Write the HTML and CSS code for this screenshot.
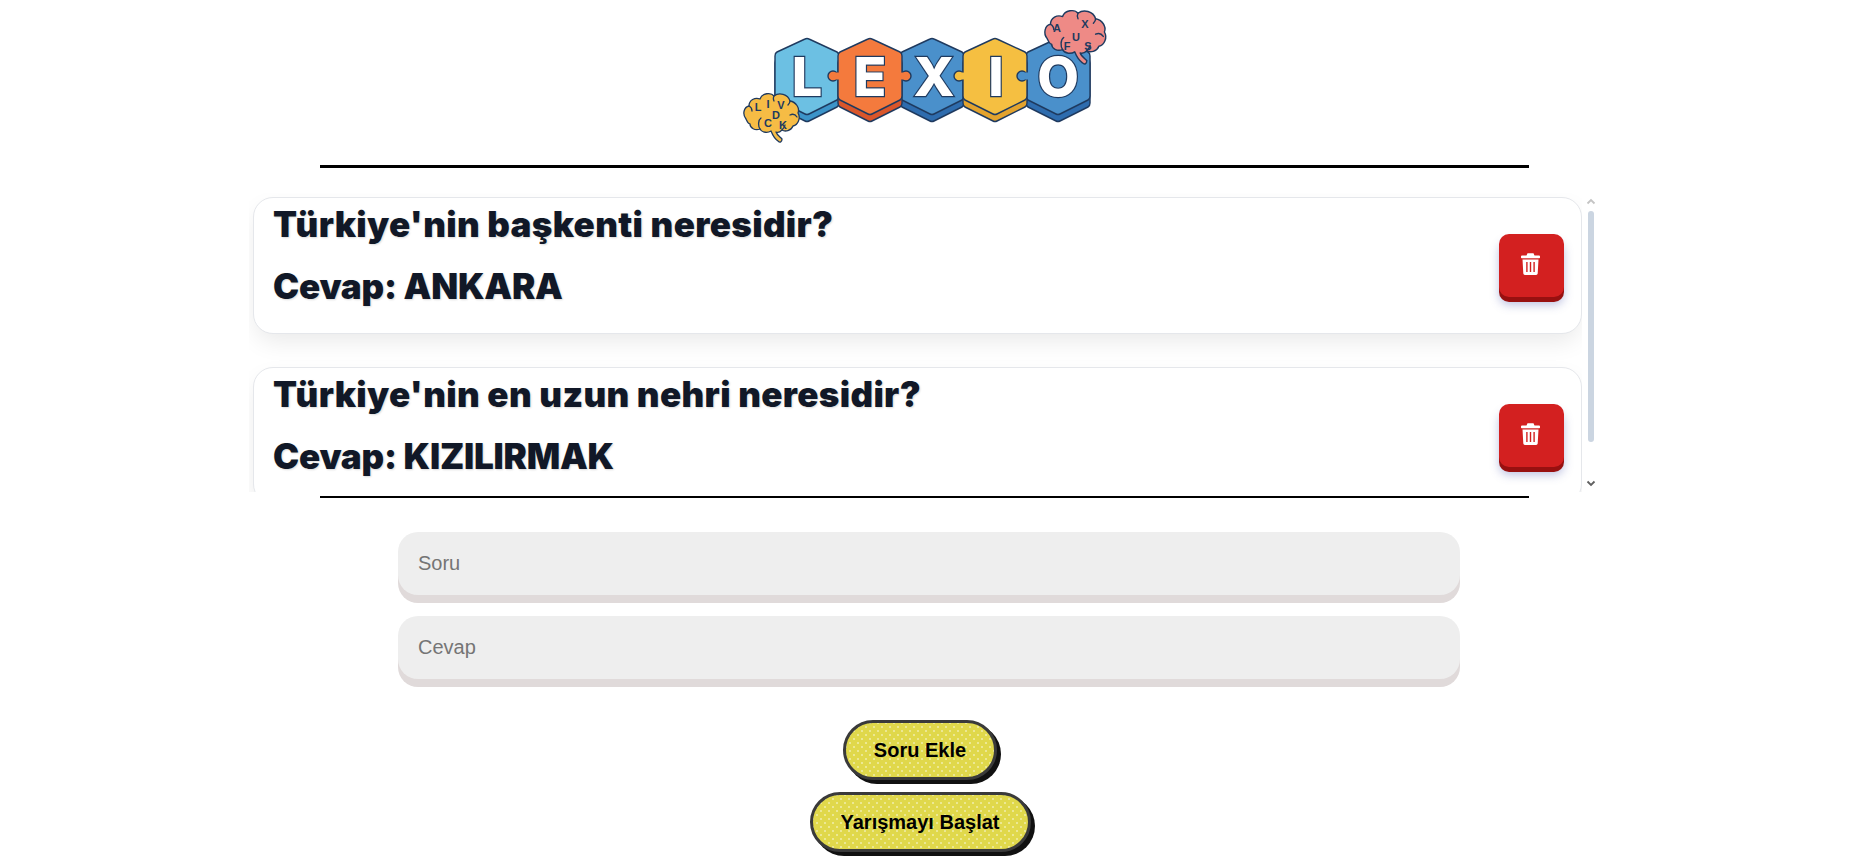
FILE: index.html
```html
<!DOCTYPE html>
<html>
<head>
    <meta charset="utf-8">
    <link rel="stylesheet" href="styles.css">
    <title>Lexio</title>
</head>
<body>
    <div class="page">
        <svg class="logo" viewBox="-5 0 400 165" width="400" height="165">
            <defs>
                <path id="hex" d="M-2 -37 Q0 -38 2 -37 L30 -24 Q32 -23 32 -20 L32 20 Q32 23 30 24 L2 38 Q0 39 -2 38 L-30 24 Q-32 23 -32 20 L-32 -20 Q-32 -23 -30 -24 Z"/>
                <path id="brain" d="M2 26 C-2 21 0 14 5 13 C5 7 11 4 16 6 C18 0 27 -1 30 3 C35 -1 44 1 46 8 C52 9 56 15 54 20 C57 25 54 32 49 33 C47 38 41 39 38 37 C36 39 34 40 32 39 C33 42 36 44 38 46 C38 49 36 50 34 48 C31 46 29 43 27 38 C24 40 18 40 16 36 C11 38 6 35 6 31 C4 31 3 28 2 26 Z"/>
                <path id="creases" d="M5 13 C7 14 8 16 8 18 M30 3 C29 5 29 6 30 8 M46 8 C46 10 45 11 44 12 M17 25 C14 27 14 33 16 36 M46 22 C48 21 51 21 53 24 M38 37 C40 35 41 34 41 32"/>
            </defs>

            <g class="hex-row">
                <use href="#hex" x="77" y="83" fill="#3c94c9"/>
                <use href="#hex" x="77" y="76" fill="#6cc0e3"/>
                <use href="#hex" x="328" y="83" fill="#2e6cae"/>
                <use href="#hex" x="328" y="76" fill="#4a90cb"/>
                <use href="#hex" x="202" y="83" fill="#2e6cae"/>
                <use href="#hex" x="202" y="76" fill="#4a90cb"/>
                <use href="#hex" x="140" y="83" fill="#d9562b"/>
                <use href="#hex" x="140" y="76" fill="#f47a3d"/>
                <use href="#hex" x="265" y="83" fill="#e3a32e"/>
                <use href="#hex" x="265" y="76" fill="#f5bf41"/>
                <circle cx="103" cy="76" r="5" fill="#f47a3d"/>
                <rect x="104" y="72.5" width="6" height="7" fill="#f47a3d"/>
                <circle cx="176" cy="76" r="5" fill="#f47a3d"/>
                <rect x="169" y="72.5" width="6" height="7" fill="#f47a3d"/>
                <circle cx="229" cy="76" r="5" fill="#f5bf41"/>
                <rect x="230" y="72.5" width="6" height="7" fill="#f5bf41"/>
                <circle cx="292" cy="76" r="5" fill="#4a90cb"/>
                <rect x="293" y="72.5" width="6" height="7" fill="#4a90cb"/>
            </g>

            <g class="big-letters">
                <text x="77" y="96">L</text>
                <text x="140" y="96">E</text>
                <text x="204" y="96">X</text>
                <text x="266" y="96">I</text>
                <text x="328" y="96">O</text>
            </g>

            <g transform="translate(14 93)">
                <use href="#brain" fill="#f6bc45" class="brain-line"/>
                <use href="#creases" fill="none" class="brain-line"/>
                <g class="brain-letters">
                    <text x="14" y="18">L</text>
                    <text x="24" y="15">I</text>
                    <text x="37" y="16">V</text>
                    <text x="32" y="26">D</text>
                    <text x="24" y="34">C</text>
                    <text x="39" y="36">K</text>
                </g>
            </g>

            <g transform="translate(315 10) scale(1.1 1.1)">
                <use href="#brain" fill="#ee8a86" class="brain-line"/>
                <use href="#creases" fill="none" class="brain-line"/>
            </g>
            <g class="brain-letters" transform="translate(315 9)">
                <text x="12" y="23">A</text>
                <text x="40" y="19">X</text>
                <text x="31" y="32">U</text>
                <text x="22" y="41">F</text>
                <text x="43" y="41">S</text>
            </g>
        </svg>

        <hr class="rule rule-top">

        <div class="question-area">
            <div class="question-list">
                <div class="question-card">
                    <div class="question-text">
                        <h3>Türkiye'nin başkenti neresidir?</h3>
                        <h3 class="answer">Cevap: ANKARA</h3>
                    </div>
                    <button class="delete-btn" aria-label="Sil">
                        <svg viewBox="0 0 19 22" width="19" height="22"><path fill-rule="evenodd" fill="#fff" d="M6.5 0.3h6l1 2.2h4.5a1 1 0 0 1 1 1v1a.8.8 0 0 1-.8.8H.8a.8.8 0 0 1-.8-.8v-1a1 1 0 0 1 1-1h4.5zM1.5 6.5h16l-.8 14a1.6 1.6 0 0 1-1.6 1.4H3.9a1.6 1.6 0 0 1-1.6-1.4zM5.2 9v10h1.4V9zM8.8 9v10h1.4V9zM12.4 9v10h1.4V9z"/></svg>
                    </button>
                </div>
                <div class="question-card">
                    <div class="question-text">
                        <h3>Türkiye'nin en uzun nehri neresidir?</h3>
                        <h3 class="answer">Cevap: KIZILIRMAK</h3>
                    </div>
                    <button class="delete-btn" aria-label="Sil">
                        <svg viewBox="0 0 19 22" width="19" height="22"><path fill-rule="evenodd" fill="#fff" d="M6.5 0.3h6l1 2.2h4.5a1 1 0 0 1 1 1v1a.8.8 0 0 1-.8.8H.8a.8.8 0 0 1-.8-.8v-1a1 1 0 0 1 1-1h4.5zM1.5 6.5h16l-.8 14a1.6 1.6 0 0 1-1.6 1.4H3.9a1.6 1.6 0 0 1-1.6-1.4zM5.2 9v10h1.4V9zM8.8 9v10h1.4V9zM12.4 9v10h1.4V9z"/></svg>
                    </button>
                </div>
            </div>
            <!-- headless chrome hides real scrollbars, so this one is drawn -->
            <div class="scrollbar">
                <svg class="scroll-arrow" viewBox="0 0 10 7" width="10" height="7"><path d="M1.5 5.5L5 2l3.5 3.5" fill="none" stroke="#c4c4c4" stroke-width="1.8"/></svg>
                <div class="scroll-track"><div class="scroll-thumb"></div></div>
                <svg class="scroll-arrow" viewBox="0 0 10 7" width="10" height="7"><path d="M1.5 1.5L5 5l3.5-3.5" fill="none" stroke="#606060" stroke-width="1.8"/></svg>
            </div>
        </div>

        <hr class="rule rule-bottom">

        <div class="form">
            <input class="text-input" placeholder="Soru">
            <input class="text-input" placeholder="Cevap">
        </div>

        <div class="actions">
            <button class="pop-btn">Soru Ekle</button>
            <button class="pop-btn">Yarışmayı Başlat</button>
        </div>
    </div>
</body>
</html>
```

FILE: styles.css
```css
html, body {
    margin: 0;
    background: #fff;
}

.page {
    width: 1849px;
    padding-bottom: 16px;
    display: flex;
    flex-direction: column;
    align-items: center;
    font-family: "Liberation Sans", Arial, sans-serif;
}

.logo {
    display: block;
    flex: none;
}

.hex-row use,
.hex-row circle {
    stroke: #1f3a5f;
    stroke-width: 1.4;
}

.big-letters text {
    font-family: Inter, "Liberation Sans", sans-serif;
    font-weight: 800;
    font-size: 54px;
    text-anchor: middle;
    fill: #fff;
    stroke: #1f3a5f;
    stroke-width: 2.4;
    paint-order: stroke;
}

.brain-line {
    stroke: #1f3a5f;
    stroke-width: 1.3;
    stroke-linejoin: round;
    stroke-linecap: round;
}

.brain-letters text {
    font-family: "Liberation Sans", sans-serif;
    font-weight: 700;
    font-size: 11px;
    text-anchor: middle;
    fill: #1f3a5f;
}

.rule {
    width: 1209px;
    margin: 0;
    border: 0;
    background: #000;
    flex: none;
}

.rule-top {
    height: 3px;
    margin-bottom: 25px;
}

.rule-bottom {
    height: 2px;
    margin-top: 4px;
    margin-bottom: 34px;
}

.question-area {
    display: flex;
    width: 1351px;
    height: 299px;
}

.question-list {
    flex: 1;
    min-width: 0;
    box-sizing: border-box;
    padding: 4px 0 0 4px;
    overflow: hidden;
}

.scrollbar {
    display: flex;
    flex-direction: column;
    align-items: center;
    width: 18px;
}

.scroll-arrow {
    flex: none;
    margin: 5px 0;
}

.scroll-track {
    flex: 1;
}

.scroll-thumb {
    width: 6px;
    height: 231px;
    margin-top: 1px;
    border-radius: 3px;
    background: #cbd5e1;
}

.question-card {
    display: flex;
    align-items: center;
    justify-content: space-between;
    height: 137px;
    box-sizing: border-box;
    margin-bottom: 33px;
    padding: 0 17px 0 19px;
    background: #fff;
    border: 1px solid #e5e7eb;
    border-radius: 20px;
    box-shadow: 0 10px 25px -3px rgba(0, 0, 0, 0.09);
}

.question-text {
    align-self: flex-start;
}

.question-text h3 {
    margin: 0 0 9px;
    font-family: Inter, "Liberation Sans", sans-serif;
    font-weight: 900;
    font-size: 35px;
    line-height: 53px;
    letter-spacing: 0.35px;
    color: #111827;
    text-shadow: 1px 1px 2px rgba(0, 0, 0, 0.15);
}

.question-text .answer {
    letter-spacing: -0.2px;
}

.delete-btn {
    display: flex;
    align-items: center;
    justify-content: center;
    width: 65px;
    height: 63px;
    padding: 0 2px 3px 0;
    border: 0;
    border-radius: 10px;
    background: #d32020;
    box-shadow: 0 5px 0 #981010, 0 8px 10px rgba(70, 80, 170, 0.35);
}

.form {
    display: flex;
    flex-direction: column;
    gap: 21px;
    width: 1062px;
    margin-left: 9px;
}

.text-input {
    height: 63px;
    box-sizing: border-box;
    padding: 0 20px;
    border: 0;
    border-radius: 20px;
    outline: none;
    background: #eeeeee;
    box-shadow: 0 8px 0 #e0dada;
    font-family: "Liberation Sans", Arial, sans-serif;
    font-size: 20px;
}

.text-input::placeholder {
    color: #757575;
}

.actions {
    display: flex;
    flex-direction: column;
    align-items: center;
    gap: 12px;
    margin-top: 41px;
    margin-right: 9px;
}

.pop-btn {
    height: 60px;
    padding: 0 28px;
    border: 3px solid #3a3a3a;
    border-radius: 30px;
    background-color: #e0d84b;
    background-image: radial-gradient(rgba(255, 255, 255, 0.4) 1px, transparent 1.5px), radial-gradient(rgba(255, 255, 255, 0.4) 1px, transparent 1.5px);
    background-size: 8px 8px;
    background-position: 0 0, 4px 4px;
    box-shadow: 4px 4px 0 #111;
    font-family: "Liberation Sans", Arial, sans-serif;
    font-weight: 700;
    font-size: 20px;
    color: #000;
}
```
